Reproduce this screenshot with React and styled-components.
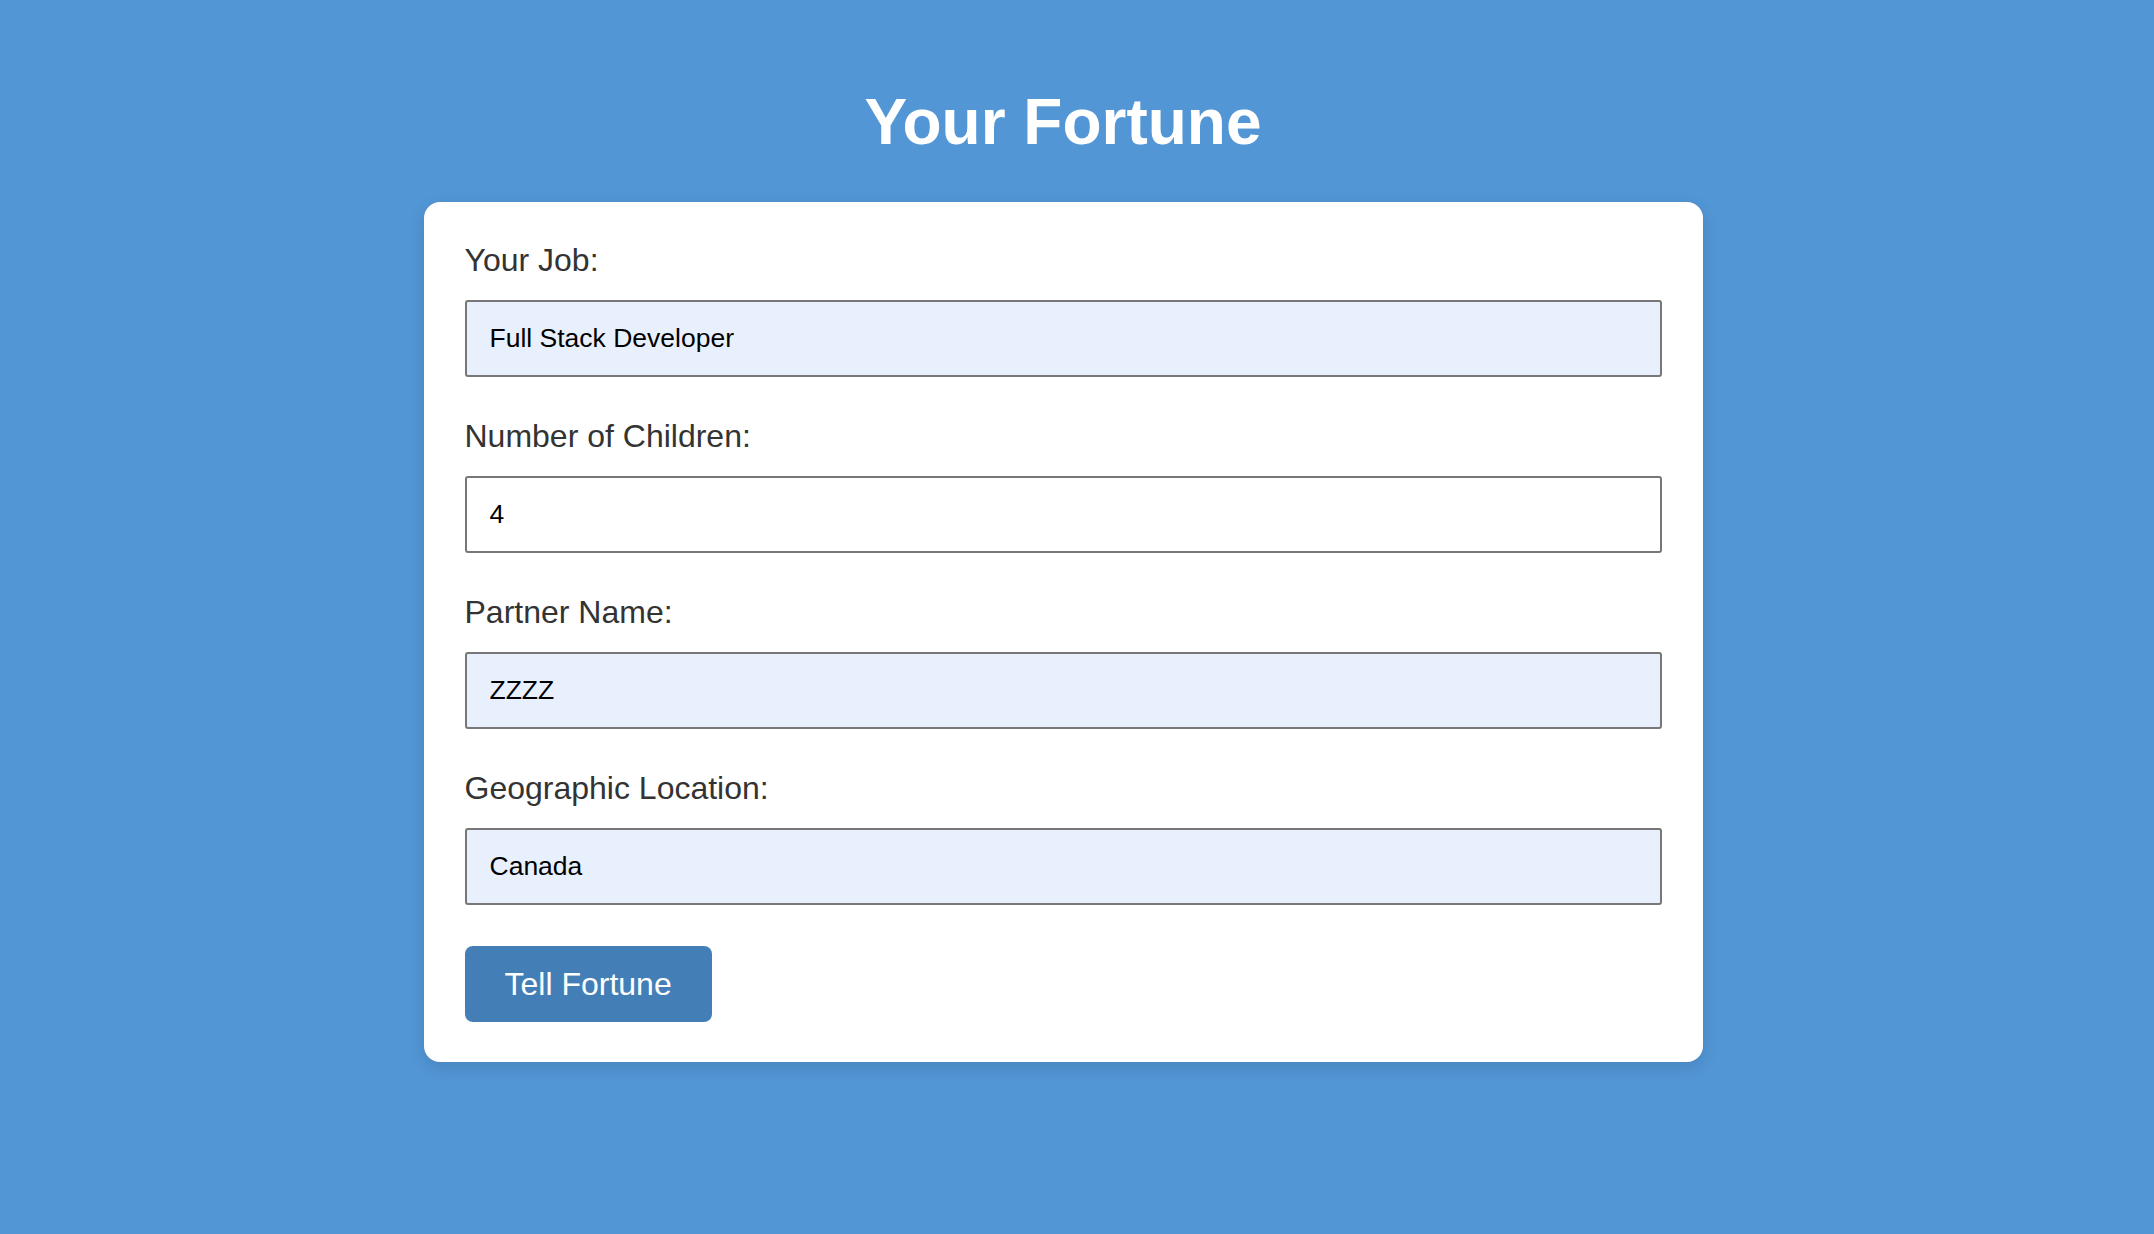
import React, { useState } from 'react';
import styled, { createGlobalStyle } from 'styled-components';

const GlobalStyle = createGlobalStyle`
  html, body {
    margin: 0;
    padding: 0;
    background-color: #5296d5;
    font-family: "Liberation Sans", Arial, sans-serif;
  }
`;

const Page = styled.div`
  min-height: 1234px;
  box-sizing: border-box;
  padding: 85px 28px 0 0;
  display: flex;
  flex-direction: column;
  align-items: center;
`;

const Title = styled.h1`
  margin: 0 0 42px;
  font-size: 64px;
  font-weight: 700;
  color: #ffffff;
  line-height: 75px;
`;

const Card = styled.form`
  width: 1279px;
  box-sizing: border-box;
  padding: 40px 41px;
  background-color: #ffffff;
  border-radius: 16px;
  box-shadow: 0 5px 16px rgba(0, 0, 0, 0.12);
`;

const FormGroup = styled.div`
  display: flex;
  flex-direction: column;
  margin-bottom: 41px;
`;

const Label = styled.label`
  font-size: 32px;
  color: #333333;
  line-height: normal;
  margin-bottom: 21px;
`;

const Input = styled.input`
  box-sizing: border-box;
  width: 100%;
  height: 77px;
  padding: 0 23px;
  font-family: "Liberation Sans", Arial, sans-serif;
  font-size: 26.5px;
  color: #000000;
  background-color: ${props => (props.$filled ? '#e8f0fe' : '#ffffff')};
  border: 2px solid #777777;
  border-radius: 3px;
  outline: none;
`;

const Button = styled.button`
  height: 76px;
  padding: 0 40px;
  font-family: "Liberation Sans", Arial, sans-serif;
  font-size: 32px;
  color: #ffffff;
  background-color: #437fb6;
  border: none;
  border-radius: 8px;
  cursor: pointer;
`;

const fields = [
  { id: 'job', label: 'Your Job:', value: 'Full Stack Developer', filled: true },
  { id: 'children', label: 'Number of Children:', value: '4', filled: false },
  { id: 'partner', label: 'Partner Name:', value: 'ZZZZ', filled: true },
  { id: 'location', label: 'Geographic Location:', value: 'Canada', filled: true },
];

const App = () => {
  const [values, setValues] = useState(
    Object.fromEntries(fields.map(f => [f.id, f.value]))
  );

  const handleChange = (id, value) => {
    setValues(prev => ({ ...prev, [id]: value }));
  };

  return (
    <>
      <GlobalStyle />
      <Page>
        <Title>Your Fortune</Title>
        <Card onSubmit={e => e.preventDefault()}>
          {fields.map(field => (
            <FormGroup key={field.id}>
              <Label htmlFor={field.id}>{field.label}</Label>
              <Input
                id={field.id}
                $filled={field.filled}
                value={values[field.id]}
                onChange={e => handleChange(field.id, e.target.value)}
              />
            </FormGroup>
          ))}
          <Button type="submit">Tell Fortune</Button>
        </Card>
      </Page>
    </>
  );
};

export default App;
